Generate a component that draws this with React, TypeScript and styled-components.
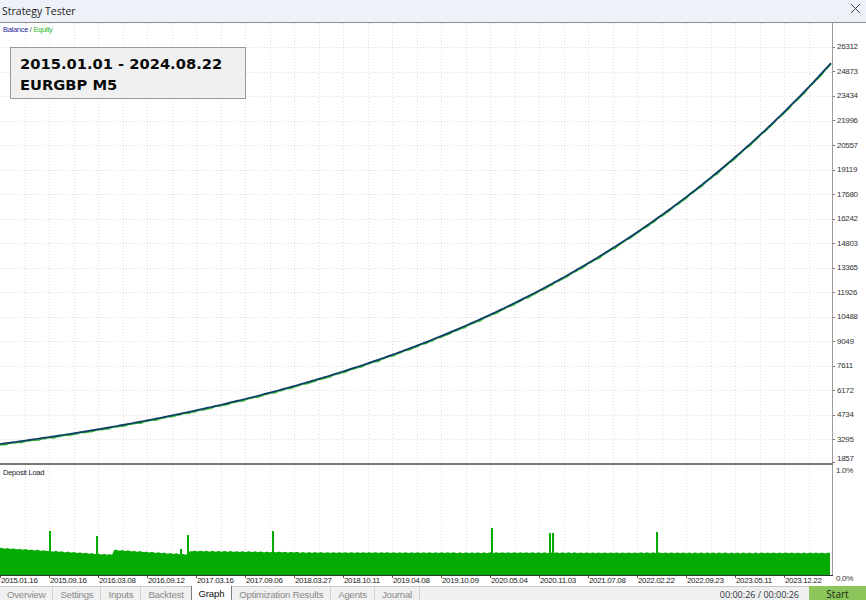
import React from "react";
import styled, {createGlobalStyle} from "styled-components";

const GlobalStyle = createGlobalStyle`
    html, body {
        margin: 0;
        padding: 0;
        background: #ffffff;
        overflow: hidden;
    }
`;

const PLOT_W = 832;
const MAIN_H = 440;
const DEP_H = 110;
const STEP_Y = 24.53;
const STEP_X = 24.5;

const priceLabels = ["26312", "24873", "23434", "21996", "20557", "19119", "17680", "16242", "14803",
    "13365", "11926", "10488", "9049", "7611", "6172", "4734", "3295", "1857"];

const dateLabels = ["2015.01.16", "2015.09.16", "2016.03.08", "2016.09.12", "2017.03.16", "2017.09.06",
    "2018.03.27", "2018.10.11", "2019.04.08", "2019.10.09", "2020.05.04", "2020.11.03", "2021.07.08",
    "2022.02.22", "2022.09.23", "2023.05.11", "2023.12.22"];

const tabs = ["Overview", "Settings", "Inputs", "Backtest", "Graph", "Optimization Results", "Agents", "Journal"];

const Window = styled.div`
    width: 866px;
    height: 600px;
    display: flex;
    flex-direction: column;
    font-family: "Liberation Sans", Arial, sans-serif;
    background: #ffffff;
`;

const TitleBar = styled.div`
    height: 22px;
    flex-shrink: 0;
    display: flex;
    align-items: center;
    justify-content: space-between;
    padding: 0 5px 0 2px;
    background: #eef2f8;
    font-family: "Open Sans", sans-serif;
    font-size: 10.5px;
    color: #222222;
`;

const CloseButton = styled.div`
    width: 11px;
    height: 11px;
    display: flex;
    margin-top: -5px;
`;

const Chart = styled.div`
    flex: 1;
    display: flex;
    flex-direction: column;
    border-top: 1px solid #8c8c8c;
`;

const Pane = styled.div<{ $h: number }>`
    height: ${p => p.$h}px;
    flex-shrink: 0;
    display: flex;
`;

const Separator = styled.div`
    height: 2px;
    width: ${PLOT_W + 1}px;
    background: #777777;
    flex-shrink: 0;
`;

const Plot = styled.div`
    position: relative;
    width: ${PLOT_W}px;
    height: 100%;
    border-right: 1px solid #9c9c9c;
    flex-shrink: 0;
`;

const PlotSvg = styled.svg`
    display: block;
`;

const PriceAxis = styled.div`
    flex: 1;
    display: flex;
    flex-direction: column;
    padding-top: 12.2px;
`;

const PriceTick = styled.div<{ $edge?: boolean }>`
    height: ${p => p.$edge ? "11px" : `${STEP_Y}px`};
    flex-shrink: 0;
    display: flex;
    align-items: ${p => p.$edge ? "flex-end" : "center"};
    font-size: 8px;
    letter-spacing: -0.3px;
    color: #333333;
    line-height: 1;

    &::before {
        content: "";
        width: 2px;
        height: 1px;
        background: #777777;
        margin-right: 2px;
        align-self: ${p => p.$edge ? "flex-end" : "center"};
    }
`;

const DepositAxis = styled.div`
    flex: 1;
    display: flex;
    flex-direction: column;
    justify-content: space-between;
    padding: 1px 0 0 3px;
    font-size: 8px;
    letter-spacing: -0.3px;
    color: #333333;
`;

const BottomPct = styled.span`
    margin-bottom: -8px;
`;

const Legend = styled.div`
    position: absolute;
    left: 3px;
    top: 2px;
    font-size: 7.5px;
    letter-spacing: -0.3px;
`;

const LegendItem = styled.span<{ $color: string }>`
    color: ${p => p.$color};
`;

const PaneTitle = styled.div`
    position: absolute;
    left: 3px;
    top: 3px;
    font-size: 7.5px;
    letter-spacing: -0.25px;
    color: #1a1a1a;
`;

const InfoBox = styled.div`
    position: absolute;
    left: 10px;
    top: 24px;
    width: 225px;
    height: 45px;
    padding: 5px 0 0 9px;
    background: #f0f0f0;
    border: 1px solid #9a9a9a;
    font-family: "DejaVu Sans", sans-serif;
    font-weight: bold;
    font-size: 14.7px;
    line-height: 21px;
    color: #0a0a0a;
`;

const DateAxis = styled.div`
    height: 10px;
    flex-shrink: 0;
    display: flex;
    border-top: 1px solid #333333;
    width: ${PLOT_W}px;
    padding-left: 1px;
`;

const DateTick = styled.div`
    width: 49px;
    flex-shrink: 0;
    position: relative;
    font-size: 8px;
    letter-spacing: -0.35px;
    color: #222222;
    line-height: 10px;
    white-space: nowrap;

    &::before {
        content: "";
        position: absolute;
        left: -1px;
        top: 0;
        width: 1px;
        height: 2px;
        background: #555555;
    }
`;

const TabBar = styled.div`
    height: 14px;
    flex-shrink: 0;
    display: flex;
    align-items: stretch;
    background: #f0f0f0;
    border-top: 1px solid #c8c8c8;
`;

const Tab = styled.div<{ $active?: boolean }>`
    display: flex;
    align-items: center;
    padding: 0 7px;
    font-family: "Liberation Sans", sans-serif;
    font-size: 9.6px;
    letter-spacing: -0.2px;
    color: ${p => p.$active ? "#111111" : "#8a8a8a"};
    background: ${p => p.$active ? "#ffffff" : "transparent"};
    border-right: 1px solid ${p => p.$active ? "#7a7a7a" : "#cfcfcf"};
    border-left: ${p => p.$active ? "1px solid #7a7a7a" : "none"};
    margin-left: ${p => p.$active ? "-1px" : "0"};
    margin-top: ${p => p.$active ? "-1px" : "0"};
`;

const Spacer = styled.div`
    flex: 1;
`;

const Timer = styled.div`
    display: flex;
    align-items: center;
    padding-right: 10px;
    font-family: "Open Sans", sans-serif;
    font-size: 9px;
    color: #2c3440;
`;

const StartButton = styled.div`
    width: 57px;
    display: flex;
    align-items: center;
    justify-content: center;
    background: #8cc65b;
    font-family: "Open Sans", sans-serif;
    font-size: 10px;
    color: #1e2a18;
    margin-top: -1px;
`;

const mainY = (v: number) => MAIN_H + 1 - (v - 1857) * STEP_Y / 1438.5;

const balancePoints: string[] = [];
const equityPoints: string[] = [];
for (let x = 0; x <= PLOT_W; x += 3) {
    const v = 3030 * Math.exp(0.002557 * x);
    balancePoints.push(`${x},${mainY(v).toFixed(2)}`);
    const jitter = (Math.sin(x * 1.3) + Math.sin(x * 0.37)) * 0.35;
    equityPoints.push(`${x},${(mainY(v) + 0.8 + jitter).toFixed(2)}`);
}

// deposit load profile: top of the green fill, in absolute page y
const depositTop = (x: number) => {
    let y;
    if (x < 114) y = 548 + x * 0.06;
    else if (x < 190) y = 550 + (x - 114) * 0.06;
    else if (x < 300) y = 551 + (x - 190) * 0.012;
    else y = 552.5 + (x - 300) * 0.001;
    return y + Math.sin(x * 2.1) * 0.5 - 465;
};

const depositPoly: string[] = [`0,${DEP_H}`];
for (let x = 0; x <= 830; x += 2) depositPoly.push(`${x},${depositTop(x).toFixed(2)}`);
depositPoly.push(`830,${DEP_H}`);

const spikes = [[49, 531], [96, 536], [180, 549], [187, 535], [272, 531], [491, 528], [549, 533], [552, 533], [656, 532]];

const verticalGrid = Array.from({length: 33}, (_, i) => (i + 1) * STEP_X);

const Grid: React.FC<{ h: number; rows?: boolean }> = ({h, rows}) => (
    <g stroke="#dcdcdc" strokeWidth={1} strokeDasharray="1 2">
        {verticalGrid.map(x => (
            <line key={`v${x}`} x1={Math.round(x) + 0.5} y1={0} x2={Math.round(x) + 0.5} y2={h}/>
        ))}
        {rows && priceLabels.slice(0, 17).map((_, i) => {
            const y = Math.round(24 + i * STEP_Y) + 0.5;
            return <line key={`h${i}`} x1={0} y1={y} x2={PLOT_W} y2={y}/>;
        })}
    </g>
);

const App: React.FC = () => {
    return (
        <>
            <GlobalStyle/>
            <Window>
                <TitleBar>
                    <span>Strategy Tester</span>
                    <CloseButton>
                        <svg width="11" height="11" viewBox="0 0 11 11">
                            <path d="M1 1 L10 10 M10 1 L1 10" stroke="#444" strokeWidth="1"/>
                        </svg>
                    </CloseButton>
                </TitleBar>

                <Chart>
                    <Pane $h={MAIN_H}>
                        <Plot>
                            <PlotSvg width={PLOT_W} height={MAIN_H}>
                                <Grid h={MAIN_H} rows/>
                                <polyline points={equityPoints.join(" ")} fill="none" stroke="#38b838" strokeWidth={1.8}/>
                                <polyline points={balancePoints.join(" ")} fill="none" stroke="#0e3b6a" strokeWidth={1.7}/>
                            </PlotSvg>
                            <Legend>
                                <LegendItem $color="#2a2aa0">Balance</LegendItem>
                                <LegendItem $color="#555"> / </LegendItem>
                                <LegendItem $color="#2eb82e">Equity</LegendItem>
                            </Legend>
                            <InfoBox>
                                <div>2015.01.01 - 2024.08.22</div>
                                <div>EURGBP M5</div>
                            </InfoBox>
                        </Plot>
                        <PriceAxis>
                            {priceLabels.map((l, i) => (
                                <PriceTick key={l} $edge={i === priceLabels.length - 1}>{l}</PriceTick>
                            ))}
                        </PriceAxis>
                    </Pane>

                    <Separator/>

                    <Pane $h={DEP_H}>
                        <Plot>
                            <PlotSvg width={PLOT_W} height={DEP_H}>
                                <Grid h={DEP_H}/>
                                <polygon points={depositPoly.join(" ")} fill="#03ab03"/>
                                {spikes.map(([x, y]) => (
                                    <rect key={x} x={x} y={y - 465} width={2} height={DEP_H - (y - 465)} fill="#03ab03"/>
                                ))}
                            </PlotSvg>
                            <PaneTitle>Deposit Load</PaneTitle>
                        </Plot>
                        <DepositAxis>
                            <span>1.0%</span>
                            <BottomPct>0.0%</BottomPct>
                        </DepositAxis>
                    </Pane>

                    <DateAxis>
                        {dateLabels.map(d => <DateTick key={d}>{d}</DateTick>)}
                    </DateAxis>
                </Chart>

                <TabBar>
                    {tabs.map(t => <Tab key={t} $active={t === "Graph"}>{t}</Tab>)}
                    <Spacer/>
                    <Timer>00:00:26 / 00:00:26</Timer>
                    <StartButton>Start</StartButton>
                </TabBar>
            </Window>
        </>
    );
};

export default App;
